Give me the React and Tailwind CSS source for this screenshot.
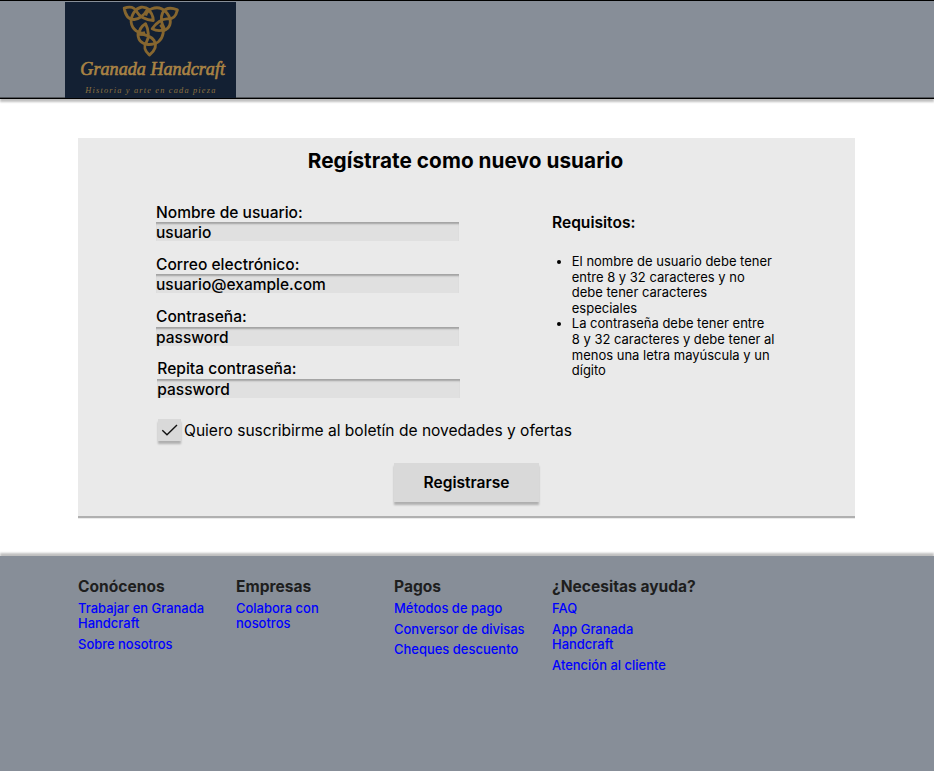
import React from "react";

// One arm of the trefoil knot, drawn around the knot's centre.
function KnotArm({ angle }) {
  return (
    <g transform={`rotate(${angle})`}>
      <path d="M-3 96C-19 81 -22 70 -12 55C-4 43 -4 19 -15 -2C-28 6 -35 19 -36 31C-18 31 2 37 12 51C21 66 14 82 -3 96Z" />
      <path d="M-38 24C-41 48 -29 61 -7 63C18 64 36 52 40 28C41 17 38 8 31 1" />
    </g>
  );
}

function Logo() {
  return (
    <svg className="block h-24 w-[171px] shrink-0" viewBox="30 6 513 288" role="img">
      <rect x="30" y="6" width="513" height="288" fill="#132033" />
      <g transform="translate(286 73) scale(0.96)" fill="none" stroke="#86662f" strokeWidth="9" strokeLinejoin="round">
        <KnotArm angle={0} />
        <KnotArm angle={120} />
        <KnotArm angle={240} />
      </g>
      <text x="76" y="225" textLength="434" lengthAdjust="spacingAndGlyphs" fill="#a98344" stroke="#a98344" strokeWidth="2" fontFamily="'Liberation Serif', serif" fontStyle="italic" fontSize="58">Granada Handcraft</text>
      <text x="91" y="280" textLength="390" fill="#8d713f" fontFamily="'Liberation Serif', serif" fontStyle="italic" fontSize="25">Historia y arte en cada pieza</text>
    </svg>
  );
}

function Field({ label, value, className = "" }) {
  return (
    <div className={"h-[52.3px] " + className}>
      <div className="h-[19.5px] text-[15.57px] leading-[19px] font-medium">{label}</div>
      <div className="h-[19px] w-[303px] bg-[#e0e0e0] text-[15.5px] leading-[21.2px] font-medium shadow-[inset_0_3px_2px_-1px_rgba(0,0,0,0.28)]">{value}</div>
    </div>
  );
}

function FooterColumn({ title, links, className }) {
  return (
    <div className={className}>
      <h3 className="text-[15.57px] leading-[19px] font-bold text-[#1e1e1e]">{title}</h3>
      <ul className="mt-[4.9px] flex flex-col gap-[5.2px]">
        {links.map((link) => (
          <li key={link} className="text-[12.97px] leading-[15.6px] font-medium text-[#0000ff]">{link}</li>
        ))}
      </ul>
    </div>
  );
}

export default function App() {
  return (
    <div className="flex h-[771px] w-[934px] flex-col overflow-hidden bg-white font-['Inter',sans-serif] text-black">
      <header className="h-[99px] shrink-0 border-t border-b border-black bg-[#878e98] pt-px pl-[65px] shadow-[inset_0_-1px_0_rgba(0,0,0,0.4),0_3px_2px_rgba(0,0,0,0.25)]">
        <Logo />
      </header>
      <main className="mx-[78px] mt-[39px] h-[378px] w-[777px] shrink-0 bg-[#eaeaea] shadow-[0_2px_0_rgba(0,0,0,0.25),0_3px_0_rgba(0,0,0,0.08)]">
        <h1 className="pt-[10px] pr-[2px] text-center text-[20.76px] leading-[26px] font-bold tracking-[0.05px]">Regístrate como nuevo usuario</h1>
        <div className="flex h-[217px] pt-[28.6px] pl-[78px]">
          <div className="w-[396px]">
            <Field label="Nombre de usuario:" value="usuario" />
            <Field label="Correo electrónico:" value="usuario@example.com" />
            <Field label="Contraseña:" value="password" />
            <Field label="Repita contraseña:" value="password" className="pl-[1.3px]" />
          </div>
          <section className="pt-[10px]">
            <h2 className="text-[15.57px] leading-[19px] font-semibold">Requisitos:</h2>
            <ul className="mt-[22.5px] w-[226px] list-disc pl-[19.8px] text-[12.99px] leading-[15.6px]">
              <li>El nombre de usuario debe tener<br />entre 8 y 32 caracteres y no<br />debe tener caracteres<br />especiales</li>
              <li>La contraseña debe tener entre<br />8 y 32 caracteres y debe tener al<br />menos una letra mayúscula y un<br />dígito</li>
            </ul>
          </section>
        </div>
        <div className="mt-[28px] flex items-center pl-[80px]">
          <span className="flex h-[22px] w-[23px] items-center justify-center bg-[#d9d9d9] shadow-[0_2.6px_2px_rgba(0,0,0,0.25)]">
            <svg width="17" height="14" viewBox="0 0 17 14" fill="none" stroke="#111" strokeWidth="1.4">
              <path d="M1.3 7.2L6 11.8L16 2" />
            </svg>
          </span>
          <span className="pl-[3px] text-[15.55px] leading-[19px]">Quiero suscribirme al boletín de novedades y ofertas</span>
        </div>
        <button className="mt-[22px] ml-[316px] block h-[39px] w-[145px] bg-[#d9d9d9] pt-px text-[15.57px] font-semibold shadow-[0_2.6px_2px_rgba(0,0,0,0.25)]">Registrarse</button>
      </main>
      <footer className="mt-[40px] flex h-[215px] shrink-0 bg-[#878e98] pt-[21px] pl-[78px] shadow-[0_-2.6px_2px_rgba(0,0,0,0.25)]">
        <FooterColumn className="w-[158px] pr-[25px]" title="Conócenos" links={["Trabajar en Granada Handcraft", "Sobre nosotros"]} />
        <FooterColumn className="w-[158px] pr-[50px]" title="Empresas" links={["Colabora con nosotros"]} />
        <FooterColumn className="w-[158px] pr-[20px]" title="Pagos" links={["Métodos de pago", "Conversor de divisas", "Cheques descuento"]} />
        <FooterColumn className="w-[130px] whitespace-nowrap [&_li]:w-[130px] [&_li]:whitespace-normal" title="¿Necesitas ayuda?" links={["FAQ", "App Granada Handcraft", "Atención al cliente"]} />
      </footer>
    </div>
  );
}
